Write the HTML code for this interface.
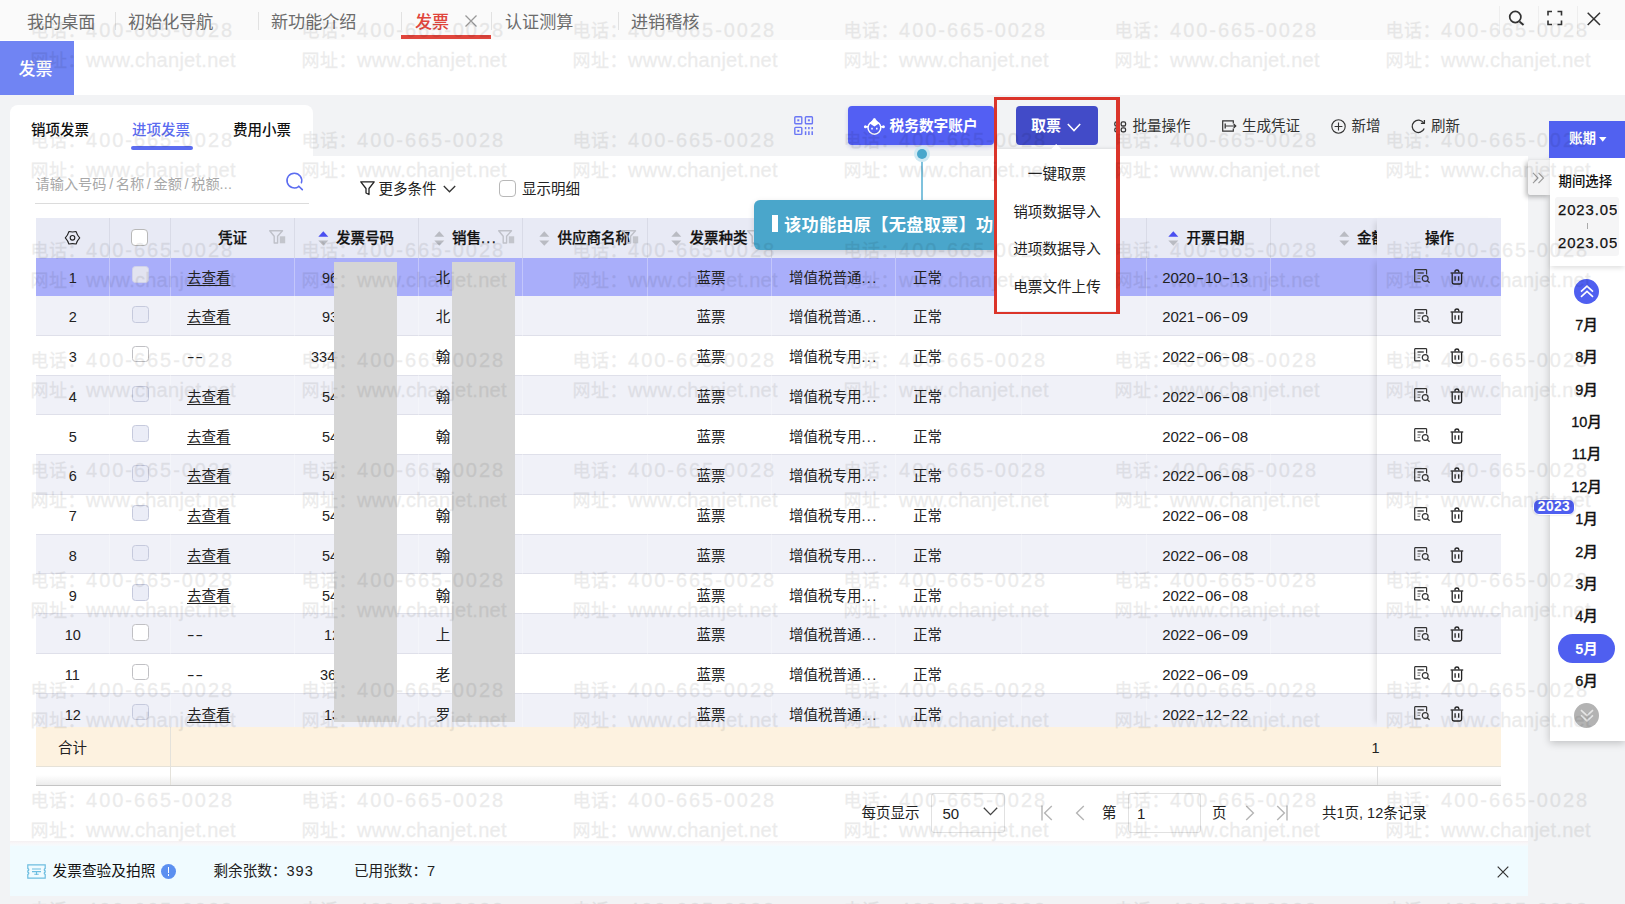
<!DOCTYPE html>
<html lang="zh-CN">
<head>
<meta charset="utf-8">
<title>发票</title>
<style>
*{box-sizing:border-box;margin:0;padding:0}
html,body{width:1625px;height:904px;overflow:hidden}
body{background:#f2f3f5;font-family:"Liberation Sans","Noto Sans CJK SC",sans-serif;font-size:14.5px;color:#222;position:relative}
.abs{position:absolute}
.t{position:absolute;white-space:nowrap;line-height:20px;height:20px}
svg{position:absolute;overflow:visible}
/* top tab bar */
#topbar{left:0;top:0;width:1625px;height:40.6px;background:#fafafa;border-bottom:1px solid #e4e4e4}
#topbar .t{font-size:17.1px;color:#6c6c6c;top:12.7px;font-weight:400}
#topbar .sep{position:absolute;top:12px;width:1px;height:18px;background:#e2e2e2}
/* second bar */
#bar2{left:0;top:40px;width:1625px;height:55px;background:#fff}
#fp{left:0;top:40.8px;width:73.8px;height:54.6px;background:#7084f3;color:#fff;font-size:17px;font-weight:500;line-height:54px;padding-left:18.5px;padding-top:2.5px}
/* cards */
#tabcard{left:10px;top:105px;width:303px;height:60px;background:#fff;border-radius:8px 8px 0 0}
#main{left:10px;top:156px;width:1518px;height:688px;background:#fff}
#tabcard2 .t{font-weight:500;top:119.5px;color:#111}
</style>
</head>
<body>
<!-- TOP TAB BAR -->
<div id="topbar" class="abs">
  <div class="t" style="left:27px">我的桌面</div><i class="sep" style="left:115px"></i>
  <div class="t" style="left:128px">初始化导航</div><i class="sep" style="left:258px"></i>
  <div class="t" style="left:271px">新功能介绍</div><i class="sep" style="left:401px"></i>
  <div class="t" style="left:415px;color:#e0453c;font-weight:500">发票</div>
  <svg style="left:465px;top:15px" width="12" height="12" viewBox="0 0 12 12"><path d="M0.5 0.5L11.5 11.5M11.5 0.5L0.5 11.5" stroke="#999" stroke-width="1.3" fill="none"/></svg>
  <div class="abs" style="left:401px;top:35px;width:90px;height:4px;background:#e0453c"></div>
  <i class="sep" style="left:491px"></i>
  <div class="t" style="left:505px">认证测算</div><i class="sep" style="left:618px"></i>
  <div class="t" style="left:631px">进销稽核</div>
  <i class="sep" style="left:1499px;top:6px;height:28px;background:#eee"></i>
  <i class="sep" style="left:1538px;top:6px;height:28px;background:#eee"></i>
  <i class="sep" style="left:1577px;top:6px;height:28px;background:#eee"></i>
  <svg style="left:1507px;top:9px" width="20" height="20" viewBox="0 0 20 20"><circle cx="8.3" cy="8" r="5.6" fill="none" stroke="#333" stroke-width="1.7"/><path d="M12.5 12.5L16.5 16" stroke="#333" stroke-width="1.8"/></svg>
  <svg style="left:1547px;top:10px" width="16" height="16" viewBox="0 0 16 16"><path d="M1 5.5V1.5H5M10.5 1.5H14.5V5.5M14.5 10.5V14.5H10.5M5 14.5H1V10.5" fill="none" stroke="#333" stroke-width="1.6"/></svg>
  <svg style="left:1587px;top:12px" width="14" height="14" viewBox="0 0 14 14"><path d="M0.7 0.7L13 13M13 0.7L0.7 13" stroke="#333" stroke-width="1.5" fill="none"/></svg>
</div>
<div id="bar2" class="abs"></div>
<div id="fp" class="abs">发票</div>

<!-- CARDS -->
<div id="tabcard" class="abs"></div>
<div id="main" class="abs"></div>
<div id="tabcard2">
  <div class="t" style="left:31px">销项发票</div>
  <div class="t" style="left:132px;color:#5b6cf0">进项发票</div>
  <div class="t" style="left:233px">费用小票</div>
  <div class="abs" style="left:131px;top:146px;width:62px;height:3.5px;background:#5b6cf0;border-radius:2px"></div>
</div>
<!-- FILTER ROW -->
<style>#filter s{text-decoration:none;margin:0 2.7px}#filter u{text-decoration:none;letter-spacing:.3px}</style>
<div id="filter">
  <div class="t" style="left:35.5px;top:173.5px;color:#a8a8a8;font-size:14.2px">请输入号码<s>/</s>名称<s>/</s>金额<s>/</s>税额<u>...</u></div>
  <div class="abs" style="left:35px;top:202.5px;width:274px;height:1px;background:#dcdcdc"></div>
  <svg style="left:285px;top:172px" width="20" height="20" viewBox="0 0 20 20"><path d="M13.6 14.6A7.4 7.4 0 1 1 16.4 10.8" fill="none" stroke="#5b6cf0" stroke-width="1.5" stroke-linecap="round"/><path d="M13.8 14.2L17.3 17.6" stroke="#5b6cf0" stroke-width="1.6" stroke-linecap="round"/></svg>
  <svg style="left:360px;top:181px" width="15" height="15" viewBox="0 0 15 15"><path d="M0.8 0.8H14.2L9 7.5V13.5L6 12V7.5Z" fill="none" stroke="#222" stroke-width="1.3" stroke-linejoin="round"/></svg>
  <div class="t" style="left:378.5px;top:178.5px">更多条件</div>
  <svg style="left:443px;top:185px" width="13" height="8" viewBox="0 0 13 8"><path d="M0.8 1L6.5 6.8L12.2 1" fill="none" stroke="#333" stroke-width="1.3"/></svg>
  <div class="abs" style="left:499px;top:179.5px;width:17px;height:17px;border:1px solid #b8b8b8;border-radius:4px;background:#fff"></div>
  <div class="t" style="left:522px;top:178.5px">显示明细</div>
</div>
<!-- TABLE -->
<style>
#tbl .hd{position:absolute;font-weight:500;color:#111;-webkit-text-stroke:.25px #111;white-space:nowrap;line-height:20px;top:227.5px}
#tbl .vl{position:absolute;width:1px;background:#d9dbe7;top:217.5px;height:40.2px}
#tbl .row{position:absolute;left:35.5px;width:1465.5px;height:39.75px;border-bottom:1px solid #dfe0ea}
#tbl .row .t{top:11.2px}
#tbl .row.odd{background:#fff}#tbl .row.even{background:#f0f1f8}#tbl .row.sel{background:#a9aefa;border-bottom-color:#a9aefa}
#tbl .ck{position:absolute;left:96.7px;top:10px;width:16.5px;height:16.5px;border:1px solid #c6cadd;border-radius:3.5px;background:rgba(232,234,246,.85)}
#tbl .row .ck.en{background:#fff;border-color:#c0c0c4}
#tbl .row.sel .ck{background:#e2e3f0;border-color:#d0d2ea}
#tbl .lk{text-decoration:underline;text-underline-offset:2px}
#tbl u{text-decoration:none;letter-spacing:1.3px}
#tbl .dt{font-size:15px;letter-spacing:-.2px}#tbl .dt b{display:inline-block;width:10.2px;text-align:center;font-weight:400;letter-spacing:0;transform:scaleX(1.65)}
#tbl .mask{position:absolute;top:262px;height:460px;background:#d5d5d5}
#tbl .fx{position:absolute;left:1377px;width:124px;box-shadow:-6px 0 6px -4px rgba(0,0,0,.12)}
</style>
<div id="tbl">
<div class="abs" style="left:35.5px;top:217.5px;width:1465.5px;height:40.2px;background:#e8eaf5"></div>
<i class="vl" style="left:109.0px"></i>
<i class="vl" style="left:170.0px"></i>
<i class="vl" style="left:294.0px"></i>
<i class="vl" style="left:418.0px"></i>
<i class="vl" style="left:522.0px"></i>
<i class="vl" style="left:646.5px"></i>
<i class="vl" style="left:770.5px"></i>
<i class="vl" style="left:894.5px"></i>
<i class="vl" style="left:1020.5px"></i>
<i class="vl" style="left:1145.5px"></i>
<i class="vl" style="left:1269.5px"></i>
<svg style="left:63.5px;top:230.4px" width="17" height="16" viewBox="0 0 17 16"><path d="M15.70 7.80Q13.14 10.48 12.10 14.04Q8.50 13.16 4.90 14.04Q3.86 10.48 1.30 7.80Q3.86 5.12 4.90 1.56Q8.50 2.44 12.10 1.56Q13.14 5.12 15.70 7.80Z" fill="none" stroke="#222" stroke-width="1.15" stroke-linejoin="round"/><circle cx="8.5" cy="7.8" r="2.3" fill="none" stroke="#222" stroke-width="1.15"/></svg>
<div class="abs" style="left:131.3px;top:229px;width:17px;height:17px;border:1px solid #b9b9b9;border-radius:4px;background:#fff"></div>
<div class="hd" style="left:218px">凭证</div><svg style="left:269.0px;top:229.5px" width="17" height="14" viewBox="0 0 17 14"><path d="M0.7 0.8H13.5L8.6 6.3V13H5.2V6.3Z" fill="none" stroke="#bfc1c9" stroke-width="1.4" stroke-linejoin="round"/><rect x="10.8" y="6.3" width="5.4" height="7" fill="#c3c5cc"/></svg>
<svg style="left:317.5px;top:231px" width="11" height="15" viewBox="0 0 11 15"><path d="M0.3 5.8L5.3 0.2L10.3 5.8Z" fill="#4a4ff0"/><path d="M0.3 9.4L5.3 14.8L10.3 9.4Z" fill="#b9bbc2"/></svg><div class="hd" style="left:336px">发票号码</div>
<svg style="left:434.3px;top:231px" width="11" height="15" viewBox="0 0 11 15"><path d="M0.3 5.8L5.3 0.2L10.3 5.8Z" fill="#b9bbc2"/><path d="M0.3 9.4L5.3 14.8L10.3 9.4Z" fill="#b9bbc2"/></svg><div class="hd" style="left:452px">销售<u>...</u></div><svg style="left:497.5px;top:229.5px" width="17" height="14" viewBox="0 0 17 14"><path d="M0.7 0.8H13.5L8.6 6.3V13H5.2V6.3Z" fill="none" stroke="#bfc1c9" stroke-width="1.4" stroke-linejoin="round"/><rect x="10.8" y="6.3" width="5.4" height="7" fill="#c3c5cc"/></svg>
<svg style="left:539.0px;top:231px" width="11" height="15" viewBox="0 0 11 15"><path d="M0.3 5.8L5.3 0.2L10.3 5.8Z" fill="#b9bbc2"/><path d="M0.3 9.4L5.3 14.8L10.3 9.4Z" fill="#b9bbc2"/></svg><div class="hd" style="left:557.5px">供应商名称</div><svg style="left:622.0px;top:229.5px" width="17" height="14" viewBox="0 0 17 14"><path d="M0.7 0.8H13.5L8.6 6.3V13H5.2V6.3Z" fill="none" stroke="#bfc1c9" stroke-width="1.4" stroke-linejoin="round"/><rect x="10.8" y="6.3" width="5.4" height="7" fill="#c3c5cc"/></svg>
<svg style="left:671.0px;top:231px" width="11" height="15" viewBox="0 0 11 15"><path d="M0.3 5.8L5.3 0.2L10.3 5.8Z" fill="#b9bbc2"/><path d="M0.3 9.4L5.3 14.8L10.3 9.4Z" fill="#b9bbc2"/></svg><div class="hd" style="left:689.5px">发票种类</div><svg style="left:747.0px;top:229.5px" width="17" height="14" viewBox="0 0 17 14"><path d="M0.7 0.8H13.5L8.6 6.3V13H5.2V6.3Z" fill="none" stroke="#bfc1c9" stroke-width="1.4" stroke-linejoin="round"/><rect x="10.8" y="6.3" width="5.4" height="7" fill="#c3c5cc"/></svg>
<svg style="left:795.0px;top:231px" width="11" height="15" viewBox="0 0 11 15"><path d="M0.3 5.8L5.3 0.2L10.3 5.8Z" fill="#b9bbc2"/><path d="M0.3 9.4L5.3 14.8L10.3 9.4Z" fill="#b9bbc2"/></svg><div class="hd" style="left:813px">发票类型</div>
<svg style="left:912.0px;top:231px" width="11" height="15" viewBox="0 0 11 15"><path d="M0.3 5.8L5.3 0.2L10.3 5.8Z" fill="#b9bbc2"/><path d="M0.3 9.4L5.3 14.8L10.3 9.4Z" fill="#b9bbc2"/></svg><div class="hd" style="left:930px">状态</div>
<svg style="left:1168.3px;top:231px" width="11" height="15" viewBox="0 0 11 15"><path d="M0.3 5.8L5.3 0.2L10.3 5.8Z" fill="#4a4ff0"/><path d="M0.3 9.4L5.3 14.8L10.3 9.4Z" fill="#b9bbc2"/></svg><div class="hd" style="left:1186.5px">开票日期</div>
<svg style="left:1339.0px;top:231px" width="11" height="15" viewBox="0 0 11 15"><path d="M0.3 5.8L5.3 0.2L10.3 5.8Z" fill="#b9bbc2"/><path d="M0.3 9.4L5.3 14.8L10.3 9.4Z" fill="#b9bbc2"/></svg><div class="hd" style="left:1357px">金额</div>
<div class="abs" style="left:0;top:257.7px;width:1625px;height:469.3px;overflow:hidden">
<div class="row sel" style="top:-1.30px">
<div class="t" style="left:33.2px">1</div>
<i class="ck"></i>
<div class="t lk" style="left:151.5px">去查看</div>
<div class="t" style="left:286.5px">96</div>
<div class="t" style="left:400.2px">北</div>
<div class="t" style="left:661.0px">蓝票</div>
<div class="t" style="left:753.5px">增值税普通<u>...</u></div>
<div class="t" style="left:877.5px">正常</div>
<div class="t dt" style="left:1126.8px">2020<b>-</b>10<b>-</b>13</div>
</div>
<div class="row even" style="top:38.45px">
<div class="t" style="left:33.2px">2</div>
<i class="ck"></i>
<div class="t lk" style="left:151.5px">去查看</div>
<div class="t" style="left:286.5px">93</div>
<div class="t" style="left:400.2px">北</div>
<div class="t" style="left:661.0px">蓝票</div>
<div class="t" style="left:753.5px">增值税普通<u>...</u></div>
<div class="t" style="left:877.5px">正常</div>
<div class="t dt" style="left:1126.8px">2021<b>-</b>06<b>-</b>09</div>
</div>
<div class="row odd" style="top:78.20px">
<div class="t" style="left:33.2px">3</div>
<i class="ck en"></i>
<div class="t" style="left:151.5px;letter-spacing:.6px;transform:scaleX(1.55);transform-origin:0 50%">--</div>
<div class="t" style="left:275.5px">334</div>
<div class="t" style="left:400.2px">翰</div>
<div class="t" style="left:661.0px">蓝票</div>
<div class="t" style="left:753.5px">增值税专用<u>...</u></div>
<div class="t" style="left:877.5px">正常</div>
<div class="t dt" style="left:1126.8px">2022<b>-</b>06<b>-</b>08</div>
</div>
<div class="row even" style="top:117.95px">
<div class="t" style="left:33.2px">4</div>
<i class="ck"></i>
<div class="t lk" style="left:151.5px">去查看</div>
<div class="t" style="left:286.5px">54</div>
<div class="t" style="left:400.2px">翰</div>
<div class="t" style="left:661.0px">蓝票</div>
<div class="t" style="left:753.5px">增值税专用<u>...</u></div>
<div class="t" style="left:877.5px">正常</div>
<div class="t dt" style="left:1126.8px">2022<b>-</b>06<b>-</b>08</div>
</div>
<div class="row odd" style="top:157.70px">
<div class="t" style="left:33.2px">5</div>
<i class="ck"></i>
<div class="t lk" style="left:151.5px">去查看</div>
<div class="t" style="left:286.5px">54</div>
<div class="t" style="left:400.2px">翰</div>
<div class="t" style="left:661.0px">蓝票</div>
<div class="t" style="left:753.5px">增值税专用<u>...</u></div>
<div class="t" style="left:877.5px">正常</div>
<div class="t dt" style="left:1126.8px">2022<b>-</b>06<b>-</b>08</div>
</div>
<div class="row even" style="top:197.45px">
<div class="t" style="left:33.2px">6</div>
<i class="ck"></i>
<div class="t lk" style="left:151.5px">去查看</div>
<div class="t" style="left:286.5px">54</div>
<div class="t" style="left:400.2px">翰</div>
<div class="t" style="left:661.0px">蓝票</div>
<div class="t" style="left:753.5px">增值税专用<u>...</u></div>
<div class="t" style="left:877.5px">正常</div>
<div class="t dt" style="left:1126.8px">2022<b>-</b>06<b>-</b>08</div>
</div>
<div class="row odd" style="top:237.20px">
<div class="t" style="left:33.2px">7</div>
<i class="ck"></i>
<div class="t lk" style="left:151.5px">去查看</div>
<div class="t" style="left:286.5px">54</div>
<div class="t" style="left:400.2px">翰</div>
<div class="t" style="left:661.0px">蓝票</div>
<div class="t" style="left:753.5px">增值税专用<u>...</u></div>
<div class="t" style="left:877.5px">正常</div>
<div class="t dt" style="left:1126.8px">2022<b>-</b>06<b>-</b>08</div>
</div>
<div class="row even" style="top:276.95px">
<div class="t" style="left:33.2px">8</div>
<i class="ck"></i>
<div class="t lk" style="left:151.5px">去查看</div>
<div class="t" style="left:286.5px">54</div>
<div class="t" style="left:400.2px">翰</div>
<div class="t" style="left:661.0px">蓝票</div>
<div class="t" style="left:753.5px">增值税专用<u>...</u></div>
<div class="t" style="left:877.5px">正常</div>
<div class="t dt" style="left:1126.8px">2022<b>-</b>06<b>-</b>08</div>
</div>
<div class="row odd" style="top:316.70px">
<div class="t" style="left:33.2px">9</div>
<i class="ck"></i>
<div class="t lk" style="left:151.5px">去查看</div>
<div class="t" style="left:286.5px">54</div>
<div class="t" style="left:400.2px">翰</div>
<div class="t" style="left:661.0px">蓝票</div>
<div class="t" style="left:753.5px">增值税专用<u>...</u></div>
<div class="t" style="left:877.5px">正常</div>
<div class="t dt" style="left:1126.8px">2022<b>-</b>06<b>-</b>08</div>
</div>
<div class="row even" style="top:356.45px">
<div class="t" style="left:29.2px">10</div>
<i class="ck en"></i>
<div class="t" style="left:151.5px;letter-spacing:.6px;transform:scaleX(1.55);transform-origin:0 50%">--</div>
<div class="t" style="left:288.5px">12</div>
<div class="t" style="left:400.2px">上</div>
<div class="t" style="left:661.0px">蓝票</div>
<div class="t" style="left:753.5px">增值税普通<u>...</u></div>
<div class="t" style="left:877.5px">正常</div>
<div class="t dt" style="left:1126.8px">2022<b>-</b>06<b>-</b>09</div>
</div>
<div class="row odd" style="top:396.20px">
<div class="t" style="left:29.2px">11</div>
<i class="ck en"></i>
<div class="t" style="left:151.5px;letter-spacing:.6px;transform:scaleX(1.55);transform-origin:0 50%">--</div>
<div class="t" style="left:284.5px">36</div>
<div class="t" style="left:400.2px">老</div>
<div class="t" style="left:661.0px">蓝票</div>
<div class="t" style="left:753.5px">增值税普通<u>...</u></div>
<div class="t" style="left:877.5px">正常</div>
<div class="t dt" style="left:1126.8px">2022<b>-</b>06<b>-</b>09</div>
</div>
<div class="row even" style="top:435.95px">
<div class="t" style="left:29.2px">12</div>
<i class="ck"></i>
<div class="t lk" style="left:151.5px">去查看</div>
<div class="t" style="left:288.5px">13</div>
<div class="t" style="left:400.2px">罗</div>
<div class="t" style="left:661.0px">蓝票</div>
<div class="t" style="left:753.5px">增值税普通<u>...</u></div>
<div class="t" style="left:877.5px">正常</div>
<div class="t dt" style="left:1126.8px">2022<b>-</b>12<b>-</b>22</div>
</div>
<i class="abs" style="left:109.0px;top:0;width:1px;height:480px;background:rgba(255,255,255,.3)"></i>
<i class="abs" style="left:170.0px;top:0;width:1px;height:480px;background:rgba(255,255,255,.3)"></i>
<i class="abs" style="left:294.0px;top:0;width:1px;height:480px;background:rgba(255,255,255,.3)"></i>
<i class="abs" style="left:418.0px;top:0;width:1px;height:480px;background:rgba(255,255,255,.3)"></i>
<i class="abs" style="left:522.0px;top:0;width:1px;height:480px;background:rgba(255,255,255,.3)"></i>
<i class="abs" style="left:646.5px;top:0;width:1px;height:480px;background:rgba(255,255,255,.3)"></i>
<i class="abs" style="left:770.5px;top:0;width:1px;height:480px;background:rgba(255,255,255,.3)"></i>
<i class="abs" style="left:894.5px;top:0;width:1px;height:480px;background:rgba(255,255,255,.3)"></i>
<i class="abs" style="left:1020.5px;top:0;width:1px;height:480px;background:rgba(255,255,255,.3)"></i>
<i class="abs" style="left:1145.5px;top:0;width:1px;height:480px;background:rgba(255,255,255,.3)"></i>
<i class="abs" style="left:1269.5px;top:0;width:1px;height:480px;background:rgba(255,255,255,.3)"></i>
<div class="mask" style="left:334px;width:63.3px;top:4.3px"></div>
<div class="mask" style="left:452px;width:63.3px;top:4.3px"></div>
<div class="row sel" style="top:-1.30px;left:1377px;width:124px">
<svg style="left:36.8px;top:12.6px" width="17" height="15" viewBox="0 0 17 15"><path d="M12.6 5.5V1.2Q12.6 0.7 12.1 0.7H1.2Q0.7 0.7 0.7 1.2V12.4Q0.7 12.9 1.2 12.9H6.6" fill="none" stroke="#333" stroke-width="1.2"/><path d="M3.5 4H9.8" stroke="#333" stroke-width="1.3"/><path d="M3.5 6.8H6.6M3.5 9.3H6" stroke="#888" stroke-width="1.2"/><circle cx="11.2" cy="9.5" r="2.9" fill="none" stroke="#333" stroke-width="1.2"/><path d="M13.3 11.6L15.6 13.8" stroke="#333" stroke-width="1.3"/></svg><svg style="left:73.3px;top:12.2px" width="14" height="16" viewBox="0 0 14 16"><path d="M0.6 4H13.2" stroke="#222" stroke-width="1.3"/><path d="M5 3.6V2.4Q5 1 6.9 1Q8.8 1 8.8 2.4V3.6" fill="none" stroke="#222" stroke-width="1.4"/><path d="M2.2 4.2V13.2Q2.2 15 4 15H9.8Q11.6 15 11.6 13.2V4.2" fill="none" stroke="#222" stroke-width="1.3"/><path d="M5.1 7.3V11.7M8.7 7.3V11.7" stroke="#222" stroke-width="1.3"/></svg>
</div>
<div class="row even" style="top:38.45px;left:1377px;width:124px">
<svg style="left:36.8px;top:12.6px" width="17" height="15" viewBox="0 0 17 15"><path d="M12.6 5.5V1.2Q12.6 0.7 12.1 0.7H1.2Q0.7 0.7 0.7 1.2V12.4Q0.7 12.9 1.2 12.9H6.6" fill="none" stroke="#333" stroke-width="1.2"/><path d="M3.5 4H9.8" stroke="#333" stroke-width="1.3"/><path d="M3.5 6.8H6.6M3.5 9.3H6" stroke="#888" stroke-width="1.2"/><circle cx="11.2" cy="9.5" r="2.9" fill="none" stroke="#333" stroke-width="1.2"/><path d="M13.3 11.6L15.6 13.8" stroke="#333" stroke-width="1.3"/></svg><svg style="left:73.3px;top:12.2px" width="14" height="16" viewBox="0 0 14 16"><path d="M0.6 4H13.2" stroke="#222" stroke-width="1.3"/><path d="M5 3.6V2.4Q5 1 6.9 1Q8.8 1 8.8 2.4V3.6" fill="none" stroke="#222" stroke-width="1.4"/><path d="M2.2 4.2V13.2Q2.2 15 4 15H9.8Q11.6 15 11.6 13.2V4.2" fill="none" stroke="#222" stroke-width="1.3"/><path d="M5.1 7.3V11.7M8.7 7.3V11.7" stroke="#222" stroke-width="1.3"/></svg>
</div>
<div class="row odd" style="top:78.20px;left:1377px;width:124px">
<svg style="left:36.8px;top:12.6px" width="17" height="15" viewBox="0 0 17 15"><path d="M12.6 5.5V1.2Q12.6 0.7 12.1 0.7H1.2Q0.7 0.7 0.7 1.2V12.4Q0.7 12.9 1.2 12.9H6.6" fill="none" stroke="#333" stroke-width="1.2"/><path d="M3.5 4H9.8" stroke="#333" stroke-width="1.3"/><path d="M3.5 6.8H6.6M3.5 9.3H6" stroke="#888" stroke-width="1.2"/><circle cx="11.2" cy="9.5" r="2.9" fill="none" stroke="#333" stroke-width="1.2"/><path d="M13.3 11.6L15.6 13.8" stroke="#333" stroke-width="1.3"/></svg><svg style="left:73.3px;top:12.2px" width="14" height="16" viewBox="0 0 14 16"><path d="M0.6 4H13.2" stroke="#222" stroke-width="1.3"/><path d="M5 3.6V2.4Q5 1 6.9 1Q8.8 1 8.8 2.4V3.6" fill="none" stroke="#222" stroke-width="1.4"/><path d="M2.2 4.2V13.2Q2.2 15 4 15H9.8Q11.6 15 11.6 13.2V4.2" fill="none" stroke="#222" stroke-width="1.3"/><path d="M5.1 7.3V11.7M8.7 7.3V11.7" stroke="#222" stroke-width="1.3"/></svg>
</div>
<div class="row even" style="top:117.95px;left:1377px;width:124px">
<svg style="left:36.8px;top:12.6px" width="17" height="15" viewBox="0 0 17 15"><path d="M12.6 5.5V1.2Q12.6 0.7 12.1 0.7H1.2Q0.7 0.7 0.7 1.2V12.4Q0.7 12.9 1.2 12.9H6.6" fill="none" stroke="#333" stroke-width="1.2"/><path d="M3.5 4H9.8" stroke="#333" stroke-width="1.3"/><path d="M3.5 6.8H6.6M3.5 9.3H6" stroke="#888" stroke-width="1.2"/><circle cx="11.2" cy="9.5" r="2.9" fill="none" stroke="#333" stroke-width="1.2"/><path d="M13.3 11.6L15.6 13.8" stroke="#333" stroke-width="1.3"/></svg><svg style="left:73.3px;top:12.2px" width="14" height="16" viewBox="0 0 14 16"><path d="M0.6 4H13.2" stroke="#222" stroke-width="1.3"/><path d="M5 3.6V2.4Q5 1 6.9 1Q8.8 1 8.8 2.4V3.6" fill="none" stroke="#222" stroke-width="1.4"/><path d="M2.2 4.2V13.2Q2.2 15 4 15H9.8Q11.6 15 11.6 13.2V4.2" fill="none" stroke="#222" stroke-width="1.3"/><path d="M5.1 7.3V11.7M8.7 7.3V11.7" stroke="#222" stroke-width="1.3"/></svg>
</div>
<div class="row odd" style="top:157.70px;left:1377px;width:124px">
<svg style="left:36.8px;top:12.6px" width="17" height="15" viewBox="0 0 17 15"><path d="M12.6 5.5V1.2Q12.6 0.7 12.1 0.7H1.2Q0.7 0.7 0.7 1.2V12.4Q0.7 12.9 1.2 12.9H6.6" fill="none" stroke="#333" stroke-width="1.2"/><path d="M3.5 4H9.8" stroke="#333" stroke-width="1.3"/><path d="M3.5 6.8H6.6M3.5 9.3H6" stroke="#888" stroke-width="1.2"/><circle cx="11.2" cy="9.5" r="2.9" fill="none" stroke="#333" stroke-width="1.2"/><path d="M13.3 11.6L15.6 13.8" stroke="#333" stroke-width="1.3"/></svg><svg style="left:73.3px;top:12.2px" width="14" height="16" viewBox="0 0 14 16"><path d="M0.6 4H13.2" stroke="#222" stroke-width="1.3"/><path d="M5 3.6V2.4Q5 1 6.9 1Q8.8 1 8.8 2.4V3.6" fill="none" stroke="#222" stroke-width="1.4"/><path d="M2.2 4.2V13.2Q2.2 15 4 15H9.8Q11.6 15 11.6 13.2V4.2" fill="none" stroke="#222" stroke-width="1.3"/><path d="M5.1 7.3V11.7M8.7 7.3V11.7" stroke="#222" stroke-width="1.3"/></svg>
</div>
<div class="row even" style="top:197.45px;left:1377px;width:124px">
<svg style="left:36.8px;top:12.6px" width="17" height="15" viewBox="0 0 17 15"><path d="M12.6 5.5V1.2Q12.6 0.7 12.1 0.7H1.2Q0.7 0.7 0.7 1.2V12.4Q0.7 12.9 1.2 12.9H6.6" fill="none" stroke="#333" stroke-width="1.2"/><path d="M3.5 4H9.8" stroke="#333" stroke-width="1.3"/><path d="M3.5 6.8H6.6M3.5 9.3H6" stroke="#888" stroke-width="1.2"/><circle cx="11.2" cy="9.5" r="2.9" fill="none" stroke="#333" stroke-width="1.2"/><path d="M13.3 11.6L15.6 13.8" stroke="#333" stroke-width="1.3"/></svg><svg style="left:73.3px;top:12.2px" width="14" height="16" viewBox="0 0 14 16"><path d="M0.6 4H13.2" stroke="#222" stroke-width="1.3"/><path d="M5 3.6V2.4Q5 1 6.9 1Q8.8 1 8.8 2.4V3.6" fill="none" stroke="#222" stroke-width="1.4"/><path d="M2.2 4.2V13.2Q2.2 15 4 15H9.8Q11.6 15 11.6 13.2V4.2" fill="none" stroke="#222" stroke-width="1.3"/><path d="M5.1 7.3V11.7M8.7 7.3V11.7" stroke="#222" stroke-width="1.3"/></svg>
</div>
<div class="row odd" style="top:237.20px;left:1377px;width:124px">
<svg style="left:36.8px;top:12.6px" width="17" height="15" viewBox="0 0 17 15"><path d="M12.6 5.5V1.2Q12.6 0.7 12.1 0.7H1.2Q0.7 0.7 0.7 1.2V12.4Q0.7 12.9 1.2 12.9H6.6" fill="none" stroke="#333" stroke-width="1.2"/><path d="M3.5 4H9.8" stroke="#333" stroke-width="1.3"/><path d="M3.5 6.8H6.6M3.5 9.3H6" stroke="#888" stroke-width="1.2"/><circle cx="11.2" cy="9.5" r="2.9" fill="none" stroke="#333" stroke-width="1.2"/><path d="M13.3 11.6L15.6 13.8" stroke="#333" stroke-width="1.3"/></svg><svg style="left:73.3px;top:12.2px" width="14" height="16" viewBox="0 0 14 16"><path d="M0.6 4H13.2" stroke="#222" stroke-width="1.3"/><path d="M5 3.6V2.4Q5 1 6.9 1Q8.8 1 8.8 2.4V3.6" fill="none" stroke="#222" stroke-width="1.4"/><path d="M2.2 4.2V13.2Q2.2 15 4 15H9.8Q11.6 15 11.6 13.2V4.2" fill="none" stroke="#222" stroke-width="1.3"/><path d="M5.1 7.3V11.7M8.7 7.3V11.7" stroke="#222" stroke-width="1.3"/></svg>
</div>
<div class="row even" style="top:276.95px;left:1377px;width:124px">
<svg style="left:36.8px;top:12.6px" width="17" height="15" viewBox="0 0 17 15"><path d="M12.6 5.5V1.2Q12.6 0.7 12.1 0.7H1.2Q0.7 0.7 0.7 1.2V12.4Q0.7 12.9 1.2 12.9H6.6" fill="none" stroke="#333" stroke-width="1.2"/><path d="M3.5 4H9.8" stroke="#333" stroke-width="1.3"/><path d="M3.5 6.8H6.6M3.5 9.3H6" stroke="#888" stroke-width="1.2"/><circle cx="11.2" cy="9.5" r="2.9" fill="none" stroke="#333" stroke-width="1.2"/><path d="M13.3 11.6L15.6 13.8" stroke="#333" stroke-width="1.3"/></svg><svg style="left:73.3px;top:12.2px" width="14" height="16" viewBox="0 0 14 16"><path d="M0.6 4H13.2" stroke="#222" stroke-width="1.3"/><path d="M5 3.6V2.4Q5 1 6.9 1Q8.8 1 8.8 2.4V3.6" fill="none" stroke="#222" stroke-width="1.4"/><path d="M2.2 4.2V13.2Q2.2 15 4 15H9.8Q11.6 15 11.6 13.2V4.2" fill="none" stroke="#222" stroke-width="1.3"/><path d="M5.1 7.3V11.7M8.7 7.3V11.7" stroke="#222" stroke-width="1.3"/></svg>
</div>
<div class="row odd" style="top:316.70px;left:1377px;width:124px">
<svg style="left:36.8px;top:12.6px" width="17" height="15" viewBox="0 0 17 15"><path d="M12.6 5.5V1.2Q12.6 0.7 12.1 0.7H1.2Q0.7 0.7 0.7 1.2V12.4Q0.7 12.9 1.2 12.9H6.6" fill="none" stroke="#333" stroke-width="1.2"/><path d="M3.5 4H9.8" stroke="#333" stroke-width="1.3"/><path d="M3.5 6.8H6.6M3.5 9.3H6" stroke="#888" stroke-width="1.2"/><circle cx="11.2" cy="9.5" r="2.9" fill="none" stroke="#333" stroke-width="1.2"/><path d="M13.3 11.6L15.6 13.8" stroke="#333" stroke-width="1.3"/></svg><svg style="left:73.3px;top:12.2px" width="14" height="16" viewBox="0 0 14 16"><path d="M0.6 4H13.2" stroke="#222" stroke-width="1.3"/><path d="M5 3.6V2.4Q5 1 6.9 1Q8.8 1 8.8 2.4V3.6" fill="none" stroke="#222" stroke-width="1.4"/><path d="M2.2 4.2V13.2Q2.2 15 4 15H9.8Q11.6 15 11.6 13.2V4.2" fill="none" stroke="#222" stroke-width="1.3"/><path d="M5.1 7.3V11.7M8.7 7.3V11.7" stroke="#222" stroke-width="1.3"/></svg>
</div>
<div class="row even" style="top:356.45px;left:1377px;width:124px">
<svg style="left:36.8px;top:12.6px" width="17" height="15" viewBox="0 0 17 15"><path d="M12.6 5.5V1.2Q12.6 0.7 12.1 0.7H1.2Q0.7 0.7 0.7 1.2V12.4Q0.7 12.9 1.2 12.9H6.6" fill="none" stroke="#333" stroke-width="1.2"/><path d="M3.5 4H9.8" stroke="#333" stroke-width="1.3"/><path d="M3.5 6.8H6.6M3.5 9.3H6" stroke="#888" stroke-width="1.2"/><circle cx="11.2" cy="9.5" r="2.9" fill="none" stroke="#333" stroke-width="1.2"/><path d="M13.3 11.6L15.6 13.8" stroke="#333" stroke-width="1.3"/></svg><svg style="left:73.3px;top:12.2px" width="14" height="16" viewBox="0 0 14 16"><path d="M0.6 4H13.2" stroke="#222" stroke-width="1.3"/><path d="M5 3.6V2.4Q5 1 6.9 1Q8.8 1 8.8 2.4V3.6" fill="none" stroke="#222" stroke-width="1.4"/><path d="M2.2 4.2V13.2Q2.2 15 4 15H9.8Q11.6 15 11.6 13.2V4.2" fill="none" stroke="#222" stroke-width="1.3"/><path d="M5.1 7.3V11.7M8.7 7.3V11.7" stroke="#222" stroke-width="1.3"/></svg>
</div>
<div class="row odd" style="top:396.20px;left:1377px;width:124px">
<svg style="left:36.8px;top:12.6px" width="17" height="15" viewBox="0 0 17 15"><path d="M12.6 5.5V1.2Q12.6 0.7 12.1 0.7H1.2Q0.7 0.7 0.7 1.2V12.4Q0.7 12.9 1.2 12.9H6.6" fill="none" stroke="#333" stroke-width="1.2"/><path d="M3.5 4H9.8" stroke="#333" stroke-width="1.3"/><path d="M3.5 6.8H6.6M3.5 9.3H6" stroke="#888" stroke-width="1.2"/><circle cx="11.2" cy="9.5" r="2.9" fill="none" stroke="#333" stroke-width="1.2"/><path d="M13.3 11.6L15.6 13.8" stroke="#333" stroke-width="1.3"/></svg><svg style="left:73.3px;top:12.2px" width="14" height="16" viewBox="0 0 14 16"><path d="M0.6 4H13.2" stroke="#222" stroke-width="1.3"/><path d="M5 3.6V2.4Q5 1 6.9 1Q8.8 1 8.8 2.4V3.6" fill="none" stroke="#222" stroke-width="1.4"/><path d="M2.2 4.2V13.2Q2.2 15 4 15H9.8Q11.6 15 11.6 13.2V4.2" fill="none" stroke="#222" stroke-width="1.3"/><path d="M5.1 7.3V11.7M8.7 7.3V11.7" stroke="#222" stroke-width="1.3"/></svg>
</div>
<div class="row even" style="top:435.95px;left:1377px;width:124px">
<svg style="left:36.8px;top:12.6px" width="17" height="15" viewBox="0 0 17 15"><path d="M12.6 5.5V1.2Q12.6 0.7 12.1 0.7H1.2Q0.7 0.7 0.7 1.2V12.4Q0.7 12.9 1.2 12.9H6.6" fill="none" stroke="#333" stroke-width="1.2"/><path d="M3.5 4H9.8" stroke="#333" stroke-width="1.3"/><path d="M3.5 6.8H6.6M3.5 9.3H6" stroke="#888" stroke-width="1.2"/><circle cx="11.2" cy="9.5" r="2.9" fill="none" stroke="#333" stroke-width="1.2"/><path d="M13.3 11.6L15.6 13.8" stroke="#333" stroke-width="1.3"/></svg><svg style="left:73.3px;top:12.2px" width="14" height="16" viewBox="0 0 14 16"><path d="M0.6 4H13.2" stroke="#222" stroke-width="1.3"/><path d="M5 3.6V2.4Q5 1 6.9 1Q8.8 1 8.8 2.4V3.6" fill="none" stroke="#222" stroke-width="1.4"/><path d="M2.2 4.2V13.2Q2.2 15 4 15H9.8Q11.6 15 11.6 13.2V4.2" fill="none" stroke="#222" stroke-width="1.3"/><path d="M5.1 7.3V11.7M8.7 7.3V11.7" stroke="#222" stroke-width="1.3"/></svg>
</div>
<div class="fx" style="top:0;height:469.3px"></div>
</div>
<div class="abs" style="left:1377px;top:217.5px;width:124px;height:40.2px;background:#e8eaf5;box-shadow:-6px 0 6px -4px rgba(0,0,0,.12)"></div>
<div class="hd" style="left:1425px">操作</div>
<div class="abs" style="left:35.5px;top:727px;width:1465.5px;height:39.5px;background:#fdf2e0;border-bottom:1px solid #e6e2d8"></div>
<div class="abs" style="left:35.5px;top:766.5px;width:1465.5px;height:19px;background:linear-gradient(#fff 45%,#ececec 100%);border-bottom:1.4px solid #c4c4c4"></div>
<i class="abs" style="left:170px;top:727px;width:1px;height:58px;background:#e4e2db"></i>
<i class="abs" style="left:1377px;top:766px;width:1px;height:19px;background:#dcdcdc"></i>
<div class="t" style="left:58px;top:737.5px">合计</div>
<div class="t" style="left:1371.5px;top:738px">1</div>
</div>
<!-- TOOLBAR -->
<style>
#tb .t{top:116px;color:#333}
#dd .t{color:#222;width:120px;text-align:center;left:997px;font-size:14.6px}
</style>
<div id="tb">
  <!-- qr icon -->
  <svg style="left:794px;top:115.5px" width="20" height="20" viewBox="0 0 20 20" fill="none" stroke="#6b77f5" stroke-width="1.4">
    <rect x="0.8" y="0.8" width="7" height="7" rx="0.8"/><rect x="11.4" y="0.8" width="7" height="7" rx="0.8"/><rect x="0.8" y="11.4" width="7" height="7" rx="0.8"/>
    <rect x="3.3" y="3.3" width="2" height="2" fill="#6b77f5" stroke="none"/><rect x="13.9" y="3.3" width="2" height="2" fill="#6b77f5" stroke="none"/><rect x="3.3" y="13.9" width="2" height="2" fill="#6b77f5" stroke="none"/>
    <path d="M11.6 11V13.2M14.9 11V13.2M18.2 11V13.2M11.6 15.2V19M14.9 15.2V19M18.2 15.2V19" stroke-width="1.5"/>
  </svg>
  <!-- tax account button -->
  <div class="abs" style="left:847.5px;top:106px;width:146.5px;height:38.5px;background:#535ff3;border-radius:4px;box-shadow:0 2px 4px rgba(60,70,200,.22)"></div>
  <svg style="left:863px;top:115.5px" width="22" height="19" viewBox="0 0 22 19" fill="none" stroke="#fff" stroke-width="1.5">
    <circle cx="11.4" cy="11.8" r="6.4"/>
    <path d="M6.8 7.6L10.6 2.4Q11.4 1.5 12.2 2.4L16 7.6L11.4 10.4Z" fill="#fff" stroke="none"/>
    <circle cx="2.4" cy="10.8" r="1.5" fill="#fff" stroke="none"/><circle cx="20.4" cy="10.8" r="1.5" fill="#fff" stroke="none"/>
    <path d="M3 10.8H5M17.8 10.8H19.8" stroke-width="1.6"/>
    <path d="M9 11.8V13.6M13.8 11.8V13.6" stroke-width="1.5"/>
  </svg>
  <div class="t" style="left:889.5px;top:116.2px;color:#fff;font-weight:700;font-size:14.7px">税务数字账户</div>
  <!-- guide dot + line -->
  <div class="abs" style="left:920.8px;top:156px;width:2px;height:46px;background:#7fc2dd"></div>
  <div class="abs" style="left:913.7px;top:145.8px;width:16px;height:16px;border-radius:50%;background:#cfe9f3"></div>
  <div class="abs" style="left:916.7px;top:148.8px;width:10px;height:10px;border-radius:50%;background:#49a7cc"></div>
  <!-- tooltip -->
  <div class="abs" style="left:754px;top:199.7px;width:300px;height:50.3px;background:#4aa6cb;border-radius:6px;box-shadow:0 2px 6px rgba(0,0,0,.12)"></div>
  <div class="abs" style="left:772px;top:214.5px;width:5.5px;height:17.5px;background:#fff"></div>
  <div class="t" style="left:784px;top:213px;color:#fff;font-weight:700;font-size:17.2px;letter-spacing:.27px;line-height:24px;height:24px">该功能由原【无盘取票】功能升级</div>
  <!-- right actions -->
  <svg style="left:1114px;top:120.6px" width="12.4" height="11.8" viewBox="0 0 14 13" fill="none" stroke="#333" stroke-width="1.45"><rect x="0.9" y="0.9" width="5" height="4.6" rx="1.8"/><rect x="8.1" y="0.9" width="5" height="4.6" rx="1.8"/><rect x="0.9" y="7.5" width="5" height="4.6" rx="1.8"/><rect x="8.1" y="7.5" width="5" height="4.6" rx="1.8"/></svg>
  <div class="t" style="left:1132.5px">批量操作</div>
  <svg style="left:1222px;top:120px" width="15" height="12" viewBox="0 0 15 12" fill="none" stroke="#333" stroke-width="1.2"><path d="M11.3 3.5V0.8H0.7V11.2H11.3V8.5"/><path d="M3.6 6H13.6M11.6 3.8L13.8 6L11.6 8.2"/><path d="M3.2 3.6V8.4" stroke-width="1.3"/></svg>
  <div class="t" style="left:1242px">生成凭证</div>
  <svg style="left:1331px;top:118.5px" width="15" height="15" viewBox="0 0 15 15" fill="none" stroke="#333" stroke-width="1.1"><circle cx="7.5" cy="7.5" r="6.7"/><path d="M7.5 3.6V11.4M3.6 7.5H11.4"/></svg>
  <div class="t" style="left:1351.5px">新增</div>
  <svg style="left:1411px;top:118.5px" width="15" height="15" viewBox="0 0 15 15" fill="none" stroke="#333" stroke-width="1.3"><path d="M13.2 9.6A6.2 6.2 0 1 1 12.6 3.9"/><path d="M13.4 0.9V4.4H9.9" stroke-linejoin="round"/></svg>
  <div class="t" style="left:1431px">刷新</div>
</div>
<!-- dropdown + red highlight box -->
<div id="dd">
  <div class="abs" style="left:997px;top:149.2px;width:120px;height:162px;background:#fff;box-shadow:0 -1px 3px rgba(0,0,0,.09)"></div>
  <div class="abs" style="left:1015.6px;top:105.7px;width:82px;height:39.6px;background:#424bc8;border-radius:4px"></div>
  <div class="t" style="left:1031px;top:115.5px;width:auto;color:#fff;font-weight:700;font-size:15px">取票</div>
  <svg style="left:1067px;top:122.5px" width="14" height="9" viewBox="0 0 14 9"><path d="M0.8 1L7 7.6L13.2 1" fill="none" stroke="#fff" stroke-width="1.5"/></svg>
  <svg style="left:1051.2px;top:144.3px" width="10.4" height="5.2" viewBox="0 0 14 7"><path d="M0 7L7 0L14 7Z" fill="#fff"/></svg>
  <div class="t" style="top:164px">一键取票</div>
  <div class="t" style="top:202px">销项数据导入</div>
  <div class="t" style="top:239px">进项数据导入</div>
  <div class="t" style="top:276.5px">电票文件上传</div>
  <div class="abs" style="left:994px;top:97.2px;width:126.1px;height:217.1px;border:solid #db342a;border-width:3.5px 4.1px 2.8px 3.3px"></div>
</div>
<!-- RIGHT PERIOD PANEL -->
<style>#rp .m{position:absolute;left:1549px;width:75px;text-align:center;font-size:14.5px;font-weight:500;color:#111;line-height:20px;height:20px;-webkit-text-stroke:.3px #111}</style>
<div id="rp">
<div class="abs" style="left:1549.5px;top:157px;width:75px;height:584px;background:#fff;box-shadow:0 2px 8px rgba(0,0,0,.22)"></div>
<div class="abs" style="left:1528px;top:159.5px;width:22px;height:35px;background:#f3f3f4;box-shadow:-2px 2px 5px rgba(0,0,0,.28);border-radius:2px 0 0 2px"></div>
<svg style="left:1532px;top:172px" width="13" height="12" viewBox="0 0 13 12"><path d="M1 0.8L6 6L1 11.2M6.5 0.8L11.5 6L6.5 11.2" fill="none" stroke="#999" stroke-width="1.1"/></svg>
<div class="abs" style="left:1549.5px;top:157px;width:75px;height:109px;background:#fff;box-shadow:0 3px 5px -1px rgba(0,0,0,.13)"></div>
<div class="abs" style="left:1549px;top:120.5px;width:76px;height:37px;background:#5161f0"></div>
<div class="t" style="left:1569px;top:128.5px;color:#fff;font-weight:700;font-size:13.5px">账期</div>
<svg style="left:1599.3px;top:136.5px" width="7.5" height="5" viewBox="0 0 9 6"><path d="M0 0H9L4.5 5.6Z" fill="#fff"/></svg>
<div class="t" style="left:1558.5px;top:171.5px;font-weight:500;font-size:13.4px;color:#111">期间选择</div>
<div class="abs" style="left:1555px;top:197px;width:64px;height:59px;background:#f5f5f6;border-radius:3px;overflow:hidden"><div class="abs" style="left:0;top:0;width:61.5px;height:59px;overflow:hidden"><div class="t" style="left:3px;top:3.3px;font-size:14.9px;letter-spacing:.9px;-webkit-text-stroke:.25px #111;color:#111">2023.05</div><div class="t" style="left:3px;top:36.3px;font-size:14.9px;letter-spacing:.9px;-webkit-text-stroke:.25px #111;color:#111">2023.05</div></div><i class="abs" style="left:31.5px;top:26px;width:1px;height:6px;background:#aaa"></i></div>
<div class="abs" style="left:1574px;top:279px;width:25px;height:25px;border-radius:50%;background:#4f5ff0"></div>
<svg style="left:1579.5px;top:284.5px" width="14" height="13" viewBox="0 0 14 13"><path d="M1 6.6L7 1.2L13 6.6M1 11.8L7 6.4L13 11.8" fill="none" stroke="#fff" stroke-width="1.6"/></svg>
<div class="m" style="top:315.0px">7月</div>
<div class="m" style="top:347.3px">8月</div>
<div class="m" style="top:379.7px">9月</div>
<div class="m" style="top:412.0px">10月</div>
<div class="m" style="top:444.4px">11月</div>
<div class="m" style="top:476.8px">12月</div>
<div class="m" style="top:509.2px">1月</div>
<div class="m" style="top:541.5px">2月</div>
<div class="m" style="top:573.9px">3月</div>
<div class="m" style="top:606.3px">4月</div>
<div class="abs" style="left:1558px;top:634.1px;width:57px;height:29px;border-radius:15px;background:#4f5ff0"></div>
<div class="m" style="top:638.6px;color:#fff;font-weight:700;left:1549px;-webkit-text-stroke:0">5月</div>
<div class="m" style="top:671.0px">6月</div>
<div class="abs" style="left:1533.3px;top:499px;width:41.4px;height:15.6px;border-radius:6px;background:#4f5ff0;border:1.3px solid #fff;box-shadow:0 0 2px rgba(0,0,0,.2);color:#fff;font-size:13.8px;font-weight:700;line-height:13.4px;text-align:center;letter-spacing:.4px">2023</div>
<div class="abs" style="left:1574px;top:702.5px;width:25px;height:25px;border-radius:50%;background:#b3b3b3"></div>
<svg style="left:1579.5px;top:709px" width="14" height="13" viewBox="0 0 14 13"><path d="M1 1.2L7 6.6L13 1.2M1 6.4L7 11.8L13 6.4" fill="none" stroke="#e6e6e6" stroke-width="1.6"/></svg>
</div>
<!-- PAGINATION -->
<style>#pg .t{top:803px;color:#222}</style>
<div id="pg">
  <div class="t" style="left:861.5px">每页显示</div>
  <div class="abs" style="left:931px;top:793px;width:74px;height:40px;border:1px solid #e1e1e1;border-radius:3px;background:#fff"></div>
  <div class="t" style="left:942.5px;top:804px;font-size:15px">50</div>
  <svg style="left:982.5px;top:807px" width="15" height="9" viewBox="0 0 15 9"><path d="M0.8 0.8L7.5 7.6L14.2 0.8" fill="none" stroke="#444" stroke-width="1.3"/></svg>
  <svg style="left:1041px;top:805px" width="12" height="16" viewBox="0 0 12 16"><path d="M1 0.5V15.5M10.8 1L3.6 8L10.8 15" fill="none" stroke="#b5b5b5" stroke-width="1.4"/></svg>
  <svg style="left:1075px;top:805px" width="10" height="16" viewBox="0 0 10 16"><path d="M8.8 1L1.6 8L8.8 15" fill="none" stroke="#b5b5b5" stroke-width="1.4"/></svg>
  <div class="t" style="left:1102px">第</div>
  <div class="abs" style="left:1128px;top:793px;width:73px;height:40px;border:1px solid #e1e1e1;border-radius:3px;background:#fff"></div>
  <div class="t" style="left:1137px;top:804px;font-size:15px">1</div>
  <div class="t" style="left:1212px">页</div>
  <svg style="left:1245px;top:805px" width="10" height="16" viewBox="0 0 10 16"><path d="M1.2 1L8.4 8L1.2 15" fill="none" stroke="#b5b5b5" stroke-width="1.4"/></svg>
  <svg style="left:1276px;top:805px" width="12" height="16" viewBox="0 0 12 16"><path d="M11 0.5V15.5M1.2 1L8.4 8L1.2 15" fill="none" stroke="#b5b5b5" stroke-width="1.4"/></svg>
  <div class="t" style="left:1322px">共1页, 12条记录</div>
</div>
<!-- BOTTOM INFO BAR -->
<div id="bb">
  <div class="abs" style="left:10px;top:841px;width:1518px;height:5px;background:linear-gradient(#f4f0f2,#f9f6f8 40%,#f4fbfe)"></div>
  <div class="abs" style="left:10px;top:845.5px;width:1518px;height:50.5px;background:#f0fbff"></div>
  <svg style="left:27px;top:864px" width="19" height="15" viewBox="0 0 19 15" fill="none" stroke="#6cbde0" stroke-width="1.2"><path d="M0.8 0.8H18.2V4.6C16.9 4.9 16.9 6.6 18.2 6.9V8.1C16.9 8.4 16.9 10.1 18.2 10.4V14.2H0.8V10.4C2.1 10.1 2.1 8.4 0.8 8.1V6.9C2.1 6.6 2.1 4.9 0.8 4.6Z"/><path d="M5 5H14M5 7.6H14M9.5 7.6V11M7.3 10.2H11.7" stroke-width="1.1"/></svg>
  <div class="t" style="left:52.5px;top:861px;font-size:14.7px;color:#111">发票查验及拍照</div>
  <div class="abs" style="left:161px;top:863.5px;width:15px;height:15px;border-radius:50%;background:#5b8ff0"></div>
  <div class="abs" style="left:167.6px;top:866.5px;width:1.8px;height:6px;background:#fff"></div>
  <div class="abs" style="left:167.6px;top:873.8px;width:1.8px;height:1.8px;background:#fff"></div>
  <div class="t" style="left:213.5px;top:861px;font-size:14.6px">剩余张数：<span style="letter-spacing:1px">393</span></div>
  <div class="t" style="left:354px;top:861px;font-size:14.6px">已用张数：<span style="letter-spacing:1px">7</span></div>
  <svg style="left:1497px;top:866px" width="12" height="12" viewBox="0 0 12 12"><path d="M0.7 0.7L11.3 11.3M11.3 0.7L0.7 11.3" stroke="#333" stroke-width="1.2" fill="none"/></svg>
</div>
<!-- WATERMARK OVERLAY -->
<style>#wm{position:absolute;left:0;top:0;width:1625px;height:904px;overflow:hidden;pointer-events:none;z-index:50;opacity:.074}#wm div{position:absolute;white-space:nowrap;color:#000;-webkit-text-stroke:.35px #000;font-size:18px;line-height:24px;height:24px;font-weight:400;letter-spacing:.5px}#wm b{font-weight:400;font-size:20px;letter-spacing:1.95px}#wm i{font-style:normal;font-size:20px;letter-spacing:.27px}</style>
<div id="wm">
<div style="left:30.6px;top:18px">电话：<b>400-665-0028</b></div>
<div style="left:30.6px;top:48px">网址：<i>www.chanjet.net</i></div>
<div style="left:301.6px;top:18px">电话：<b>400-665-0028</b></div>
<div style="left:301.6px;top:48px">网址：<i>www.chanjet.net</i></div>
<div style="left:572.6px;top:18px">电话：<b>400-665-0028</b></div>
<div style="left:572.6px;top:48px">网址：<i>www.chanjet.net</i></div>
<div style="left:843.6px;top:18px">电话：<b>400-665-0028</b></div>
<div style="left:843.6px;top:48px">网址：<i>www.chanjet.net</i></div>
<div style="left:1114.6px;top:18px">电话：<b>400-665-0028</b></div>
<div style="left:1114.6px;top:48px">网址：<i>www.chanjet.net</i></div>
<div style="left:1385.6px;top:18px">电话：<b>400-665-0028</b></div>
<div style="left:1385.6px;top:48px">网址：<i>www.chanjet.net</i></div>
<div style="left:30.6px;top:128px">电话：<b>400-665-0028</b></div>
<div style="left:30.6px;top:158px">网址：<i>www.chanjet.net</i></div>
<div style="left:301.6px;top:128px">电话：<b>400-665-0028</b></div>
<div style="left:301.6px;top:158px">网址：<i>www.chanjet.net</i></div>
<div style="left:572.6px;top:128px">电话：<b>400-665-0028</b></div>
<div style="left:572.6px;top:158px">网址：<i>www.chanjet.net</i></div>
<div style="left:843.6px;top:128px">电话：<b>400-665-0028</b></div>
<div style="left:843.6px;top:158px">网址：<i>www.chanjet.net</i></div>
<div style="left:1114.6px;top:128px">电话：<b>400-665-0028</b></div>
<div style="left:1114.6px;top:158px">网址：<i>www.chanjet.net</i></div>
<div style="left:1385.6px;top:128px">电话：<b>400-665-0028</b></div>
<div style="left:1385.6px;top:158px">网址：<i>www.chanjet.net</i></div>
<div style="left:30.6px;top:238px">电话：<b>400-665-0028</b></div>
<div style="left:30.6px;top:268px">网址：<i>www.chanjet.net</i></div>
<div style="left:301.6px;top:238px">电话：<b>400-665-0028</b></div>
<div style="left:301.6px;top:268px">网址：<i>www.chanjet.net</i></div>
<div style="left:572.6px;top:238px">电话：<b>400-665-0028</b></div>
<div style="left:572.6px;top:268px">网址：<i>www.chanjet.net</i></div>
<div style="left:843.6px;top:238px">电话：<b>400-665-0028</b></div>
<div style="left:843.6px;top:268px">网址：<i>www.chanjet.net</i></div>
<div style="left:1114.6px;top:238px">电话：<b>400-665-0028</b></div>
<div style="left:1114.6px;top:268px">网址：<i>www.chanjet.net</i></div>
<div style="left:1385.6px;top:238px">电话：<b>400-665-0028</b></div>
<div style="left:1385.6px;top:268px">网址：<i>www.chanjet.net</i></div>
<div style="left:30.6px;top:348px">电话：<b>400-665-0028</b></div>
<div style="left:30.6px;top:378px">网址：<i>www.chanjet.net</i></div>
<div style="left:301.6px;top:348px">电话：<b>400-665-0028</b></div>
<div style="left:301.6px;top:378px">网址：<i>www.chanjet.net</i></div>
<div style="left:572.6px;top:348px">电话：<b>400-665-0028</b></div>
<div style="left:572.6px;top:378px">网址：<i>www.chanjet.net</i></div>
<div style="left:843.6px;top:348px">电话：<b>400-665-0028</b></div>
<div style="left:843.6px;top:378px">网址：<i>www.chanjet.net</i></div>
<div style="left:1114.6px;top:348px">电话：<b>400-665-0028</b></div>
<div style="left:1114.6px;top:378px">网址：<i>www.chanjet.net</i></div>
<div style="left:1385.6px;top:348px">电话：<b>400-665-0028</b></div>
<div style="left:1385.6px;top:378px">网址：<i>www.chanjet.net</i></div>
<div style="left:30.6px;top:458px">电话：<b>400-665-0028</b></div>
<div style="left:30.6px;top:488px">网址：<i>www.chanjet.net</i></div>
<div style="left:301.6px;top:458px">电话：<b>400-665-0028</b></div>
<div style="left:301.6px;top:488px">网址：<i>www.chanjet.net</i></div>
<div style="left:572.6px;top:458px">电话：<b>400-665-0028</b></div>
<div style="left:572.6px;top:488px">网址：<i>www.chanjet.net</i></div>
<div style="left:843.6px;top:458px">电话：<b>400-665-0028</b></div>
<div style="left:843.6px;top:488px">网址：<i>www.chanjet.net</i></div>
<div style="left:1114.6px;top:458px">电话：<b>400-665-0028</b></div>
<div style="left:1114.6px;top:488px">网址：<i>www.chanjet.net</i></div>
<div style="left:1385.6px;top:458px">电话：<b>400-665-0028</b></div>
<div style="left:1385.6px;top:488px">网址：<i>www.chanjet.net</i></div>
<div style="left:30.6px;top:568px">电话：<b>400-665-0028</b></div>
<div style="left:30.6px;top:598px">网址：<i>www.chanjet.net</i></div>
<div style="left:301.6px;top:568px">电话：<b>400-665-0028</b></div>
<div style="left:301.6px;top:598px">网址：<i>www.chanjet.net</i></div>
<div style="left:572.6px;top:568px">电话：<b>400-665-0028</b></div>
<div style="left:572.6px;top:598px">网址：<i>www.chanjet.net</i></div>
<div style="left:843.6px;top:568px">电话：<b>400-665-0028</b></div>
<div style="left:843.6px;top:598px">网址：<i>www.chanjet.net</i></div>
<div style="left:1114.6px;top:568px">电话：<b>400-665-0028</b></div>
<div style="left:1114.6px;top:598px">网址：<i>www.chanjet.net</i></div>
<div style="left:1385.6px;top:568px">电话：<b>400-665-0028</b></div>
<div style="left:1385.6px;top:598px">网址：<i>www.chanjet.net</i></div>
<div style="left:30.6px;top:678px">电话：<b>400-665-0028</b></div>
<div style="left:30.6px;top:708px">网址：<i>www.chanjet.net</i></div>
<div style="left:301.6px;top:678px">电话：<b>400-665-0028</b></div>
<div style="left:301.6px;top:708px">网址：<i>www.chanjet.net</i></div>
<div style="left:572.6px;top:678px">电话：<b>400-665-0028</b></div>
<div style="left:572.6px;top:708px">网址：<i>www.chanjet.net</i></div>
<div style="left:843.6px;top:678px">电话：<b>400-665-0028</b></div>
<div style="left:843.6px;top:708px">网址：<i>www.chanjet.net</i></div>
<div style="left:1114.6px;top:678px">电话：<b>400-665-0028</b></div>
<div style="left:1114.6px;top:708px">网址：<i>www.chanjet.net</i></div>
<div style="left:1385.6px;top:678px">电话：<b>400-665-0028</b></div>
<div style="left:1385.6px;top:708px">网址：<i>www.chanjet.net</i></div>
<div style="left:30.6px;top:788px">电话：<b>400-665-0028</b></div>
<div style="left:30.6px;top:818px">网址：<i>www.chanjet.net</i></div>
<div style="left:301.6px;top:788px">电话：<b>400-665-0028</b></div>
<div style="left:301.6px;top:818px">网址：<i>www.chanjet.net</i></div>
<div style="left:572.6px;top:788px">电话：<b>400-665-0028</b></div>
<div style="left:572.6px;top:818px">网址：<i>www.chanjet.net</i></div>
<div style="left:843.6px;top:788px">电话：<b>400-665-0028</b></div>
<div style="left:843.6px;top:818px">网址：<i>www.chanjet.net</i></div>
<div style="left:1114.6px;top:788px">电话：<b>400-665-0028</b></div>
<div style="left:1114.6px;top:818px">网址：<i>www.chanjet.net</i></div>
<div style="left:1385.6px;top:788px">电话：<b>400-665-0028</b></div>
<div style="left:1385.6px;top:818px">网址：<i>www.chanjet.net</i></div>
<div style="left:30.6px;top:898px">电话：<b>400-665-0028</b></div>
<div style="left:301.6px;top:898px">电话：<b>400-665-0028</b></div>
<div style="left:572.6px;top:898px">电话：<b>400-665-0028</b></div>
<div style="left:843.6px;top:898px">电话：<b>400-665-0028</b></div>
<div style="left:1114.6px;top:898px">电话：<b>400-665-0028</b></div>
<div style="left:1385.6px;top:898px">电话：<b>400-665-0028</b></div>
</div>
</body>
</html>
